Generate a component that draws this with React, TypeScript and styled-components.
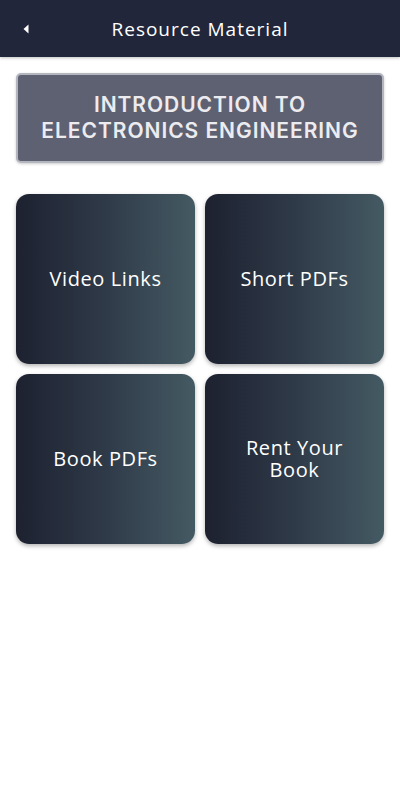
import styled, { createGlobalStyle } from "styled-components";

const GlobalStyle = createGlobalStyle`
  html, body {
    margin: 0;
    padding: 0;
    background: #ffffff;
    font-family: "Open Sans", "Liberation Sans", sans-serif;
  }
`;

const Screen = styled.div`
  width: 400px;
  min-height: 800px;
  background: #ffffff;
  display: flex;
  flex-direction: column;
`;

const TopBar = styled.header`
  height: 57px;
  background: #22263a;
  display: flex;
  align-items: center;
  box-shadow: 0 1px 3px rgba(0, 0, 0, 0.25);
`;

const BackButton = styled.button`
  width: 40px;
  height: 57px;
  margin-left: 6px;
  background: none;
  border: none;
  padding: 0;
  display: flex;
  align-items: center;
  justify-content: center;
  cursor: pointer;
`;

const TopTitle = styled.h1`
  flex: 1;
  margin: 0 46px 0 0;
  text-align: center;
  color: #ffffff;
  font-size: 19px;
  font-weight: 500;
  letter-spacing: 1px;
`;

const Content = styled.main`
  padding: 16px;
  display: flex;
  flex-direction: column;
  gap: 31px;
`;

const SubjectCard = styled.div`
  height: 86px;
  border: 2px solid #b3b5bf;
  border-radius: 5px;
  background: #5e6171;
  display: flex;
  flex-direction: column;
  align-items: center;
  justify-content: center;
  text-align: center;
  color: #ececf0;
  font-family: Inter, "Open Sans", sans-serif;
  font-size: 21px;
  font-weight: 600;
  line-height: 26px;
  letter-spacing: 0.95px;
  text-transform: uppercase;
  box-shadow: 0 1px 3px rgba(0, 0, 0, 0.2);
`;

const SubjectLine = styled.span`
  display: block;
`;

const Grid = styled.div`
  display: grid;
  grid-template-columns: 179px 179px;
  grid-auto-rows: 170px;
  gap: 10px;
`;

const Tile = styled.button`
  border: none;
  border-radius: 13px;
  background: linear-gradient(90deg, #1d2130 0%, #2f3a48 50%, #445a63 100%);
  box-shadow: 0 2px 4px rgba(0, 0, 0, 0.3);
  color: #ffffff;
  font-family: inherit;
  font-size: 20px;
  font-weight: 500;
  line-height: 22px;
  letter-spacing: 0.6px;
  padding: 0 28px;
  cursor: pointer;
`;

const tiles = ["Video Links", "Short PDFs", "Book PDFs", "Rent Your Book"];

export default function App() {
  return (
    <Screen>
      <GlobalStyle />
      <TopBar>
        <BackButton aria-label="Back">
          <svg width="6" height="10" viewBox="0 0 6 10">
            <path d="M5.5 0.5 L0.5 5 L5.5 9.5 Z" fill="#ffffff" />
          </svg>
        </BackButton>
        <TopTitle>Resource Material</TopTitle>
      </TopBar>
      <Content>
        <SubjectCard>
          <SubjectLine>Introduction to</SubjectLine>
          <SubjectLine>Electronics Engineering</SubjectLine>
        </SubjectCard>
        <Grid>
          {tiles.map(label => (
            <Tile key={label}>{label}</Tile>
          ))}
        </Grid>
      </Content>
    </Screen>
  );
}
